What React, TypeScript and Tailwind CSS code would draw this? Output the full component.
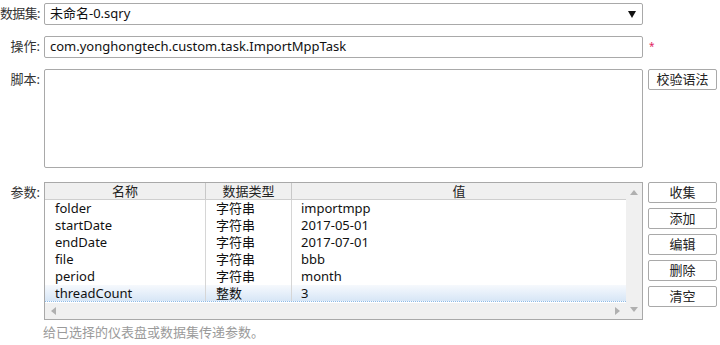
const rows = [
  { name: 'folder', type: '字符串', value: 'importmpp' },
  { name: 'startDate', type: '字符串', value: '2017-05-01' },
  { name: 'endDate', type: '字符串', value: '2017-07-01' },
  { name: 'file', type: '字符串', value: 'bbb' },
  { name: 'period', type: '字符串', value: 'month' },
  { name: 'threadCount', type: '整数', value: '3' },
]

const actions = ['收集', '添加', '编辑', '删除', '清空']

function Label({ text, className = '' }: { text: string; className?: string }) {
  return (
    <div className={`w-[44px] shrink-0 flex justify-end pr-[4px] whitespace-nowrap text-[#333] ${className}`}>{text}</div>
  )
}

function Btn({ text }: { text: string }) {
  return (
    <div className="h-[21px] w-[69px] flex items-center justify-center border border-[#a9a9a9] rounded-[2px] bg-white text-[#222] text-[13px] leading-none">
      {text}
    </div>
  )
}

export default function App() {
  return (
    <div
      className="w-[720px] h-[345px] bg-white text-[13px] overflow-hidden"
      style={{ fontFamily: '"Noto Sans", "Noto Sans CJK SC", sans-serif' }}
    >
      {/* 数据集 */}
      <div className="flex items-center mt-[3px]">
        <Label text="数据集:" className="pr-[2px] tracking-[-0.6px]" />
        <div className="w-[599px] h-[22px] border border-[#a9a9a9] rounded-[2px] flex items-center justify-between pl-[5px] pr-[6px] text-[#111]">
          <span>未命名-0.sqry</span>
          <svg width="8" height="7" viewBox="0 0 8 7">
            <path d="M0 0 L8 0 L4 7 Z" fill="#111" />
          </svg>
        </div>
      </div>

      {/* 操作 */}
      <div className="flex items-center mt-[11px]">
        <Label text="操作:" />
        <div className="w-[599px] h-[22px] border border-[#a9a9a9] rounded-[2px] flex items-center pl-[5px] text-[#111]">
          com.yonghongtech.custom.task.ImportMppTask
        </div>
        <span className="ml-[6px] -mt-[2px] text-[#e0245e] text-[10px] leading-none">*</span>
      </div>

      {/* 脚本 */}
      <div className="flex items-start mt-[11px]">
        <Label text="脚本:" className="pt-[1px]" />
        <div className="w-[599px] h-[99px] border border-[#a9a9a9] rounded-[2px]" />
        <div className="ml-[5px]">
          <Btn text="校验语法" />
        </div>
      </div>

      {/* 参数 */}
      <div className="flex items-start mt-[14px]">
        <Label text="参数:" className="pt-[1px]" />
        <div className="w-[599px] h-[138px] border border-[#a9a9a9] flex">
          <div className="flex-1 flex flex-col min-w-0">
            <div className="h-[17px] bg-[#f0f0f0] border-b border-[#cfcfcf] flex text-[#222] leading-[16px]">
              <div className="w-[161px] text-center border-r border-[#c8c8c8]">名称</div>
              <div className="w-[86px] text-center border-r border-[#c8c8c8]">数据类型</div>
              <div className="flex-1 text-center">值</div>
            </div>
            <div className="flex-1 flex flex-col">
              {rows.map((r, i) => {
                const sel = i === rows.length - 1
                return (
                  <div
                    key={r.name}
                    className={`h-[17px] flex leading-[17px] text-[#111] ${
                      sel ? 'bg-gradient-to-b from-[#f6f9fd] to-[#d7e6f6] border-b border-dotted border-[#8fbbe6]' : ''
                    }`}
                  >
                    <div className="w-[161px] pl-[10px] border-r border-[#d6d6d6]">{r.name}</div>
                    <div className="w-[86px] pl-[10px] border-r border-[#d6d6d6]">{r.type}</div>
                    <div className="flex-1 pl-[9px]">{r.value}</div>
                  </div>
                )
              })}
            </div>
            <div className="h-[16px] bg-[#f0f0f0] flex items-center justify-between px-[6px]">
              <svg width="5" height="8" viewBox="0 0 5 8"><path d="M5 0 L0 4 L5 8 Z" fill="#b0b0b0" /></svg>
              <svg width="5" height="8" viewBox="0 0 5 8"><path d="M0 0 L5 4 L0 8 Z" fill="#b0b0b0" /></svg>
            </div>
          </div>
          <div className="w-[16px] bg-[#f0f0f0] flex flex-col items-center justify-between py-[7px]">
            <svg width="8" height="5" viewBox="0 0 8 5"><path d="M0 5 L4 0 L8 5 Z" fill="#b0b0b0" /></svg>
            <svg width="8" height="5" viewBox="0 0 8 5"><path d="M0 0 L4 5 L8 0 Z" fill="#b0b0b0" /></svg>
          </div>
        </div>
        <div className="ml-[5px] flex flex-col gap-[5px]">
          {actions.map((a) => (
            <Btn key={a} text={a} />
          ))}
        </div>
      </div>

      <div className="ml-[43px] mt-[2px] text-[#9a9a9a] leading-[20px]">给已选择的仪表盘或数据集传递参数。</div>
    </div>
  )
}
